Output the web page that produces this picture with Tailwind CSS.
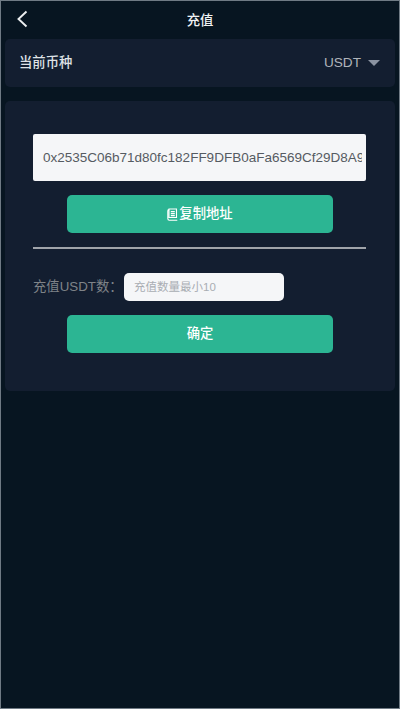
<!DOCTYPE html>
<html lang="zh">
<head>
  <meta charset="UTF-8" />
  <title>充值</title>
  <script src="https://cdn.jsdelivr.net/npm/@tailwindcss/browser@4"></script>
</head>
<body class="bg-[#071521] h-[709px] w-[400px] overflow-hidden font-['Liberation_Sans','Noto_Sans_CJK_SC',sans-serif]">
  <div class="h-full border border-[#6f7a84] px-[4px]">
    <!-- header -->
    <div class="relative h-[38px] flex items-center justify-center">
      <svg class="absolute left-[10px] top-[9px] w-[14px] h-[18px]" viewBox="0 0 14 18" fill="none" stroke="#eceef0" stroke-width="1.9"><path d="M11.5 1.5 L3.5 9 L11.5 16.5" /></svg>
      <span class="mt-[2px] text-[13.33px] text-[#f0f2f4] font-medium">充值</span>
    </div>

    <!-- coin -->
    <div class="h-[48px] rounded-[5px] bg-[#131e30] flex items-center justify-between pl-[14px] pr-[15px]">
      <span class="text-[13.33px] text-[#dfe2e6] font-medium">当前币种</span>
      <div class="flex items-center gap-[7px]">
        <span class="text-[13.6px] text-[#b0b4ba]">USDT</span>
        <span class="w-0 h-0 border-x-[6px] border-x-transparent border-t-[6px] border-t-[#8b93a1]"></span>
      </div>
    </div>

    <!-- recharge card -->
    <div class="mt-[14px] h-[290px] rounded-[5px] bg-[#131e30] pt-[33px] pl-[28px] pr-[29px]">
      <input class="block w-full h-[47px] rounded-[2px] bg-[#f5f6f8] pl-[10px] pr-[4px] text-[13.5px] text-[#555b62] outline-none" value="0x2535C06b71d80fc182FF9DFB0aFa6569Cf29D8A9C1" />
      <button class="mt-[14px] ml-[34px] w-[266px] h-[38px] rounded-[5px] bg-[#2cb593] flex items-center justify-center text-[13.33px] text-white font-medium">
        <svg class="w-[11px] h-[13px] mr-[1px]" viewBox="0 0 11 13" fill="none" stroke="#fff" stroke-width="1.1"><path d="M2 1h7.5v8.5H2zM2 1.2C1 1.4.8 2 .8 3v7.5c0 1 .5 1.7 1.5 1.7h8M3.8 3.6h4M3.8 5.6h4M3.8 7.6h4" /></svg>
        复制地址
      </button>
      <div class="mt-[14px] h-[2px] bg-[#a0a4aa]"></div>
      <div class="mt-[24px] flex items-center">
        <span class="w-[91px] text-[13.33px] text-[#7f8388] whitespace-nowrap">充值USDT数：</span>
        <input class="w-[160px] h-[28px] rounded-[5px] bg-[#f5f6f8] pl-[10px] text-[11.5px] outline-none placeholder:text-[#a9adb3]" placeholder="充值数量最小10" />
      </div>
      <button class="block mt-[14px] ml-[34px] w-[266px] h-[38px] rounded-[5px] bg-[#2cb593] text-[13.33px] text-white font-medium">确定</button>
    </div>
  </div>
</body>
</html>
